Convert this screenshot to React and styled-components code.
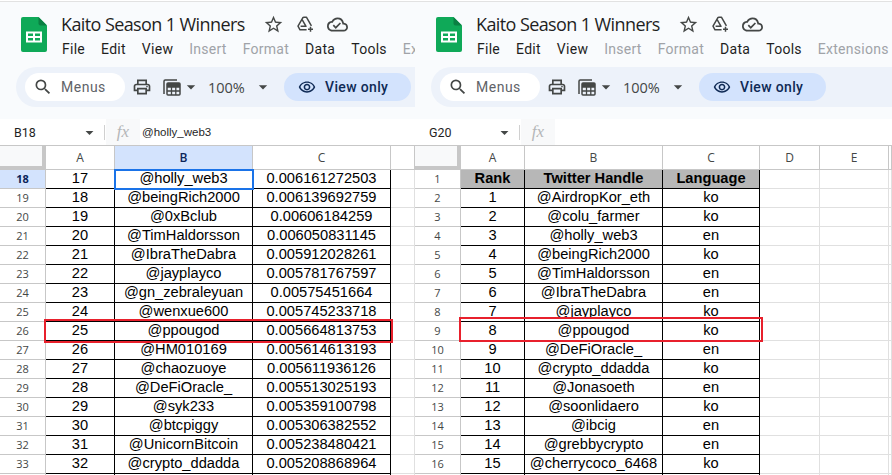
import React from 'react';
import styled, {createGlobalStyle} from 'styled-components';
import {
  MdArrowDropDown,
  MdOutlineCloudDone,
  MdOutlinePrint,
  MdOutlineRemoveRedEye,
  MdOutlineSearch,
  MdOutlineStarBorder,
} from 'react-icons/md';

const GlobalStyle = createGlobalStyle`
  html, body {
    margin: 0;
    padding: 0;
    background: #fff;
    overflow: hidden;
  }
`;

const Page = styled.div`
  display: flex;
  width: 892px;
  height: 475px;
  overflow: hidden;
`;

const Panel = styled.section`
  flex: 0 0 ${p => p.$width}px;
  width: ${p => p.$width}px;
  height: 475px;
  overflow: hidden;
  position: relative;
  display: flex;
  flex-direction: column;
`;

const Header = styled.header`
  flex: 0 0 118px;
  box-sizing: border-box;
  background: #f9fbfd;
  border-top: 1px solid #e2e2e2;
  margin-top: 1px;
  height: 117px;
  overflow: hidden;
`;

const TitleArea = styled.div`
  display: flex;
  height: 65px;
  padding-left: 21px;
`;

const LogoWrap = styled.div`
  width: 26px;
  margin: 15px 14px 0 0;
`;

const TitleBlock = styled.div`
  display: flex;
  flex-direction: column;
  white-space: nowrap;
`;

const TitleRow = styled.div`
  display: flex;
  align-items: center;
  height: 24px;
  margin-top: 10px;
`;

const Title = styled.h1`
  margin: 0;
  width: 196px;
  font: 400 18px "Open Sans", sans-serif;
  letter-spacing: -0.6px;
  color: #1f1f1f;
`;

const TitleIcon = styled.span`
  display: flex;
  width: 32px;
  justify-content: center;
  font-size: 21px;
  color: #444746;
`;

const Menu = styled.nav`
  display: flex;
  gap: 16px;
  margin-top: 2px;
  padding-left: 1px;
`;

const MenuItem = styled.span`
  font: 400 14px Roboto, sans-serif;
  letter-spacing: 0.27px;
  line-height: 22px;
  color: ${p => (p.$off ? '#a0a3a8' : '#1f1f1f')};
`;

const Toolbar = styled.div`
  display: flex;
  align-items: center;
  height: 40px;
  margin-left: 16px;
  padding-left: 9px;
  background: #edf2fa;
  border-radius: 20px 0 0 20px;
  white-space: nowrap;
`;

const SearchBox = styled.div`
  display: flex;
  align-items: center;
  width: 100px;
  height: 28px;
  flex: none;
  background: #fff;
  border-radius: 14px;
  padding-left: 8px;
  box-sizing: border-box;
  font: 400 14px Roboto, sans-serif;
  letter-spacing: 0.5px;
  color: #5f6368;
  svg {
    font-size: 20px;
    color: #444746;
    margin-right: 8px;
  }
`;

const ToolIcon = styled.span`
  display: flex;
  align-items: center;
  color: #444746;
  font-size: 20px;
  margin-left: ${p => p.$left || 0}px;
`;

const Zoom = styled.span`
  font: 400 14.5px "Open Sans", sans-serif;
  color: #444746;
  margin-left: 7px;
  width: 45px;
`;

const ViewOnly = styled.div`
  display: flex;
  align-items: center;
  flex: none;
  width: 127px;
  height: 28px;
  margin-left: 11px;
  margin-top: -1px;
  padding-left: 14px;
  box-sizing: border-box;
  border-radius: 14px;
  background: #d3e3fd;
  font: 500 14px Roboto, sans-serif;
  letter-spacing: 0.35px;
  color: #0f2a55;
  svg {
    font-size: 18px;
    margin-right: 9px;
  }
`;

const FormulaBar = styled.div`
  flex: 0 0 27px;
  box-sizing: border-box;
  display: flex;
  align-items: center;
  background: #fff;
  border-bottom: 1px solid #c7c7c7;
`;

const NameBox = styled.div`
  display: flex;
  align-items: center;
  width: 105px;
  padding-left: 14px;
  box-sizing: border-box;
  font: 400 12.5px Roboto, sans-serif;
  color: #1f1f1f;
  justify-content: space-between;
  border-right: 1px solid #d0d0d0;
  height: 15px;
  svg {
    font-size: 19px;
    color: #444746;
    margin-right: 5px;
    flex: none;
  }
`;

const FxBox = styled.div`
  width: 34px;
  height: 26px;
  margin-left: 1px;
  display: flex;
  align-items: center;
  justify-content: center;
  background: #f8f9fa;
  font: italic 400 17px "Liberation Serif", serif;
  color: #b4b6b8;
`;

const FormulaText = styled.span`
  font: 400 11.5px "Liberation Sans", sans-serif;
  color: #1f1f1f;
  margin-left: 2px;
`;

const Sheet = styled.div`
  display: grid;
  grid-template-columns: ${p => p.$cols};
  grid-auto-rows: 19px;
  grid-template-rows: 24px;
  flex: 1;
  overflow: hidden;
  position: relative;
`;

const Corner = styled.div`
  box-sizing: border-box;
  background: #f8f9fa;
  border-right: 4px solid #c7c7c7;
  border-bottom: 4px solid #c7c7c7;
`;

const ColHead = styled.div`
  box-sizing: border-box;
  display: flex;
  align-items: center;
  justify-content: center;
  background: ${p => (p.$active ? '#d3e3fd' : '#fff')};
  border-right: 1px solid #c7c7c7;
  border-bottom: 1px solid #c7c7c7;
  font: ${p => (p.$active ? 600 : 400)} 12px "Open Sans", sans-serif;
  color: ${p => (p.$active ? '#0b2559' : '#444746')};
`;

const RowHead = styled.div`
  box-sizing: border-box;
  display: flex;
  align-items: center;
  justify-content: center;
  padding-bottom: 2px;
  background: ${p => (p.$active ? '#d3e3fd' : '#fff')};
  border-right: 1px solid #c7c7c7;
  border-bottom: 1px solid #c7c7c7;
  font: ${p => (p.$active ? 700 : 400)} 11px "Open Sans", sans-serif;
  color: ${p => (p.$active ? '#0b2559' : '#444746')};
`;

const Cell = styled.div`
  box-sizing: border-box;
  position: relative;
  display: flex;
  align-items: center;
  justify-content: center;
  padding-bottom: 2px;
  white-space: nowrap;
  border-right: 1px solid #000;
  border-bottom: 1px solid #000;
  background: ${p => (p.$head ? '#b7b7b7' : '#fff')};
  font: ${p => (p.$head ? 700 : 400)} 14.67px "Liberation Sans", sans-serif;
  color: #000;
  ${p => p.$selected && `
    outline: 2px solid #1a73e8;
    outline-offset: -1px;
    z-index: 1;
  `}
`;

const Blank = styled.div`
  box-sizing: border-box;
  border-right: 1px solid #e0e0e0;
  border-bottom: 1px solid #e0e0e0;
`;

const Highlight = styled.div`
  position: absolute;
  box-sizing: border-box;
  left: ${p => p.$left}px;
  top: ${p => p.$top}px;
  width: ${p => p.$width}px;
  height: ${p => p.$height}px;
  border: 2px solid #e8202c;
  pointer-events: none;
  z-index: 2;
`;

const scores = [
  ['17', '@holly_web3', '0.006161272503'],
  ['18', '@beingRich2000', '0.006139692759'],
  ['19', '@0xBclub', '0.00606184259'],
  ['20', '@TimHaldorsson', '0.006050831145'],
  ['21', '@IbraTheDabra', '0.005912028261'],
  ['22', '@jayplayco', '0.005781767597'],
  ['23', '@gn_zebraleyuan', '0.00575451664'],
  ['24', '@wenxue600', '0.005745233718'],
  ['25', '@ppougod', '0.005664813753'],
  ['26', '@HM010169', '0.005614613193'],
  ['27', '@chaozuoye', '0.005611936126'],
  ['28', '@DeFiOracle_', '0.005513025193'],
  ['29', '@syk233', '0.005359100798'],
  ['30', '@btcpiggy', '0.005306382552'],
  ['31', '@UnicornBitcoin', '0.005238480421'],
  ['32', '@crypto_ddadda', '0.005208868964'],
];

const winners = [
  ['Rank', 'Twitter Handle', 'Language'],
  ['1', '@AirdropKor_eth', 'ko'],
  ['2', '@colu_farmer', 'ko'],
  ['3', '@holly_web3', 'en'],
  ['4', '@beingRich2000', 'ko'],
  ['5', '@TimHaldorsson', 'en'],
  ['6', '@IbraTheDabra', 'en'],
  ['7', '@jayplayco', 'ko'],
  ['8', '@ppougod', 'ko'],
  ['9', '@DeFiOracle_', 'en'],
  ['10', '@crypto_ddadda', 'ko'],
  ['11', '@Jonasoeth', 'en'],
  ['12', '@soonlidaero', 'ko'],
  ['13', '@ibcig', 'en'],
  ['14', '@grebbycrypto', 'en'],
  ['15', '@cherrycoco_6468', 'ko'],
];

const menus = [
  ['File'], ['Edit'], ['View'], ['Insert', true], ['Format', true],
  ['Data'], ['Tools'], ['Extensions', true],
];

const SheetsLogo = () => (
  <svg width="26" height="35" viewBox="0 0 26 35">
    <path d="M2 0h15.5L26 8.5V33a2 2 0 0 1-2 2H2a2 2 0 0 1-2-2V2a2 2 0 0 1 2-2z" fill="#0fa958" />
    <path d="M17.5 0L26 8.5h-6.5a2 2 0 0 1-2-2z" fill="#0a8043" />
    <path d="M5 14.5h16v11H5z" fill="#fff" />
    <path d="M7 16.5h5v2.5H7zM14 16.5h5v2.5h-5zM7 21h5v2.5H7zM14 21h5v2.5h-5z" fill="#0fa958" />
  </svg>
);

const TableIcon = () => (
  <svg width="18" height="17" viewBox="0 0 18 17" fill="none" stroke="#444746">
    <path d="M1 15V2.2A1.2 1.2 0 0 1 2.2 1H14" strokeWidth="1.5" />
    <rect x="4" y="4" width="13" height="12" rx="1" strokeWidth="1.5" />
    <path d="M4 8h13M4 12h13M8.5 8v8M12.8 8v8" strokeWidth="1.3" />
    <path d="M4 4h13v4H4z" fill="#444746" strokeWidth="0" />
  </svg>
);

// outline triangle with a small plus at the lower right
const DriveAddIcon = () => (
  <svg width="17" height="17" viewBox="0 0 17 17" fill="none" stroke="#444746" strokeWidth="1.5">
    <path d="M6.2 1.2h3.2l5 8.6M6.2 1.2L1 10.2l2 3.6h6.6M6.2 1.2L5 3.3l4 7H3.6" strokeLinejoin="round" />
    <path d="M13.5 10.8v5M11 13.3h5" />
  </svg>
);

const SpreadsheetHeader = ({cell, formula}) => (
  <>
    <Header>
      <TitleArea>
        <LogoWrap><SheetsLogo /></LogoWrap>
        <TitleBlock>
          <TitleRow>
            <Title>Kaito Season 1 Winners</Title>
            <TitleIcon><MdOutlineStarBorder /></TitleIcon>
            <TitleIcon><DriveAddIcon /></TitleIcon>
            <TitleIcon><MdOutlineCloudDone /></TitleIcon>
          </TitleRow>
          <Menu>
            {menus.map(([name, off]) => <MenuItem key={name} $off={off}>{name}</MenuItem>)}
          </Menu>
        </TitleBlock>
      </TitleArea>
      <Toolbar>
        <SearchBox><MdOutlineSearch />Menus</SearchBox>
        <ToolIcon $left={7}><MdOutlinePrint /></ToolIcon>
        <ToolIcon $left={11}><TableIcon /></ToolIcon>
        <ToolIcon><MdArrowDropDown /></ToolIcon>
        <Zoom>100%</Zoom>
        <ToolIcon><MdArrowDropDown /></ToolIcon>
        <ViewOnly><MdOutlineRemoveRedEye />View only</ViewOnly>
      </Toolbar>
    </Header>
    <FormulaBar>
      <NameBox>{cell}<MdArrowDropDown /></NameBox>
      <FxBox>fx</FxBox>
      <FormulaText>{formula}</FormulaText>
    </FormulaBar>
  </>
);

const App = () => (
  <Page>
    <GlobalStyle />
    <Panel $width={415}>
      <SpreadsheetHeader cell="B18" formula="@holly_web3" />
      <Sheet $cols="46px 69px 138px 138px 24px">
        <Corner />
        <ColHead>A</ColHead>
        <ColHead $active>B</ColHead>
        <ColHead>C</ColHead>
        <ColHead />
        {scores.map((row, i) => (
          <React.Fragment key={i}>
            <RowHead $active={i === 0}>{i + 18}</RowHead>
            {row.map((text, j) => (
              <Cell key={j} $selected={i === 0 && j === 1}>{text}</Cell>
            ))}
            <Blank />
          </React.Fragment>
        ))}
        {/* row 34 only just shows at the bottom edge */}
        <RowHead />
        <Cell />
        <Cell />
        <Cell />
        <Blank />
        <Highlight $left={44} $top={173} $width={349} $height={24} />
      </Sheet>
    </Panel>
    <Panel $width={477}>
      <SpreadsheetHeader cell="G20" />
      <Sheet $cols="46px 64px 138px 97px 60px 69px 1fr">
        <Corner />
        {['A', 'B', 'C', 'D', 'E', ''].map((name, i) => <ColHead key={i}>{name}</ColHead>)}
        {winners.map((row, i) => (
          <React.Fragment key={i}>
            <RowHead>{i + 1}</RowHead>
            {row.map((text, j) => <Cell key={j} $head={i === 0}>{text}</Cell>)}
            <Blank />
            <Blank />
            <Blank />
          </React.Fragment>
        ))}
        <RowHead />
        <Cell />
        <Cell />
        <Cell />
        <Blank />
        <Blank />
        <Blank />
        <Highlight $left={44} $top={171} $width={304} $height={25} />
      </Sheet>
    </Panel>
  </Page>
);

export default App;
